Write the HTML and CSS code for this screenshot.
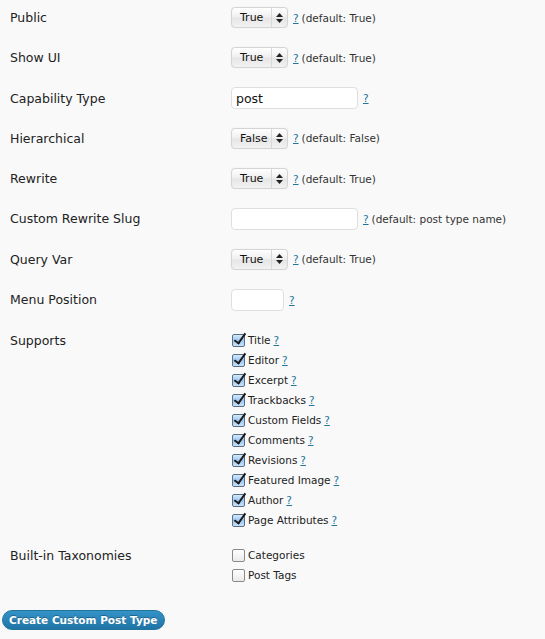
FILE: index.html
```html
<!DOCTYPE html>
<html>
<head>
<meta charset="utf-8">
<link rel="stylesheet" href="styles.css">
</head>
<body>
<div class="form">
  <div class="row">
    <div class="label">Public</div>
    <div class="field"><span class="select"><span class="val">True</span><span class="arrows"><svg width="7" height="10" viewBox="0 0 7 10"><path d="M3.5 0L7 4H0z M3.5 10L7 6H0z" fill="#222"/></svg></span></span><a class="help">?</a><span class="def">(default: True)</span></div>
  </div>
  <div class="row">
    <div class="label">Show UI</div>
    <div class="field"><span class="select"><span class="val">True</span><span class="arrows"><svg width="7" height="10" viewBox="0 0 7 10"><path d="M3.5 0L7 4H0z M3.5 10L7 6H0z" fill="#222"/></svg></span></span><a class="help">?</a><span class="def">(default: True)</span></div>
  </div>
  <div class="row">
    <div class="label">Capability Type</div>
    <div class="field"><span class="input wide">post</span><a class="help">?</a></div>
  </div>
  <div class="row">
    <div class="label">Hierarchical</div>
    <div class="field"><span class="select"><span class="val">False</span><span class="arrows"><svg width="7" height="10" viewBox="0 0 7 10"><path d="M3.5 0L7 4H0z M3.5 10L7 6H0z" fill="#222"/></svg></span></span><a class="help">?</a><span class="def">(default: False)</span></div>
  </div>
  <div class="row">
    <div class="label">Rewrite</div>
    <div class="field"><span class="select"><span class="val">True</span><span class="arrows"><svg width="7" height="10" viewBox="0 0 7 10"><path d="M3.5 0L7 4H0z M3.5 10L7 6H0z" fill="#222"/></svg></span></span><a class="help">?</a><span class="def">(default: True)</span></div>
  </div>
  <div class="row">
    <div class="label">Custom Rewrite Slug</div>
    <div class="field"><span class="input wide"></span><a class="help">?</a><span class="def">(default: post type name)</span></div>
  </div>
  <div class="row">
    <div class="label">Query Var</div>
    <div class="field"><span class="select"><span class="val">True</span><span class="arrows"><svg width="7" height="10" viewBox="0 0 7 10"><path d="M3.5 0L7 4H0z M3.5 10L7 6H0z" fill="#222"/></svg></span></span><a class="help">?</a><span class="def">(default: True)</span></div>
  </div>
  <div class="row">
    <div class="label">Menu Position</div>
    <div class="field"><span class="input narrow"></span><a class="help">?</a></div>
  </div>
  <div class="row row-list">
    <div class="label">Supports</div>
    <div class="list">
      <div class="check"><span class="box on"></span>Title <a class="help">?</a></div>
      <div class="check"><span class="box on"></span>Editor <a class="help">?</a></div>
      <div class="check"><span class="box on"></span>Excerpt <a class="help">?</a></div>
      <div class="check"><span class="box on"></span>Trackbacks <a class="help">?</a></div>
      <div class="check"><span class="box on"></span>Custom Fields <a class="help">?</a></div>
      <div class="check"><span class="box on"></span>Comments <a class="help">?</a></div>
      <div class="check"><span class="box on"></span>Revisions <a class="help">?</a></div>
      <div class="check"><span class="box on"></span>Featured Image <a class="help">?</a></div>
      <div class="check"><span class="box on"></span>Author <a class="help">?</a></div>
      <div class="check"><span class="box on"></span>Page Attributes <a class="help">?</a></div>
    </div>
  </div>
  <div class="row row-list tax">
    <div class="label">Built-in Taxonomies</div>
    <div class="list">
      <div class="check"><span class="box"></span>Categories</div>
      <div class="check"><span class="box"></span>Post Tags</div>
    </div>
  </div>
  <div class="actions"><span class="button">Create Custom Post Type</span></div>
</div>
</body>
</html>
```
FILE: styles.css
```css
html, body {
  margin: 0;
  padding: 0;
  background: #f9f9f9;
}
body {
  font-family: "DejaVu Sans", Verdana, sans-serif;
  color: #333;
  width: 545px;
  height: 639px;
  overflow: hidden;
}
.form {
  padding-top: 7px;
}
.row {
  display: flex;
  align-items: center;
  height: 21px;
  margin-bottom: 19.3px;
}
.label {
  width: 221px;
  padding-left: 10px;
  font-size: 12.5px;
  color: #222;
}
.field {
  display: flex;
  align-items: center;
  font-size: 10.5px;
  height: 21px;
}
.select {
  display: flex;
  align-items: stretch;
  width: 55px;
  height: 19px;
  border: 1px solid #d4d4d4;
  border-radius: 4px;
  background: linear-gradient(#ffffff, #f0f0f0 45%, #e6e6e6 55%, #f2f2f2);
  box-shadow: 0 0 1px rgba(0,0,0,0.15);
  font-size: 11px;
  color: #111;
}
.select .val {
  flex: 1;
  display: flex;
  align-items: center;
  padding-left: 8px;
}
.select .arrows {
  width: 15px;
  border-left: 1px solid #d8d8d8;
  display: flex;
  align-items: center;
  justify-content: center;
}
.input {
  box-sizing: border-box;
  height: 22px;
  flex-shrink: 0;
  border: 1px solid #dfdfdf;
  border-radius: 4px;
  background: #fff;
  font-size: 12.5px;
  color: #111;
  padding-left: 4px;
  display: flex;
  align-items: center;
}
.input.wide { width: 127px; }
.input.narrow { width: 53px; }
.help {
  color: #21759b;
  text-decoration: underline;
  font-size: 10.5px;
  margin-left: 5px;
  margin-right: 3px;
}
.def {
  color: #333;
}
.row-list {
  height: auto;
  align-items: flex-start;
  margin-bottom: 0;
}
.row-list .label {
  padding-top: 4px;
}
.list {
  display: flex;
  flex-direction: column;
  padding-top: 1px;
}
.check {
  display: flex;
  align-items: center;
  height: 20px;
  font-size: 10.5px;
  color: #222;
}
.check .help {
  margin-left: 3px;
}
.box {
  box-sizing: border-box;
  width: 13px;
  height: 13px;
  margin: 0 3px 0 1px;
  border: 1px solid #8a8a8a;
  border-radius: 2px;
  background: linear-gradient(#fff, #eaeaea);
  position: relative;
}
.box.on {
  background: linear-gradient(#d4e8fb, #9cc8f2 50%, #c8e2fa);
  border-color: #5a6e85;
}
.box.on::after {
  content: "";
  position: absolute;
  left: 4px;
  top: -4px;
  width: 4px;
  height: 11px;
  border-right: 2.5px solid #1a1a1a;
  border-bottom: 2.5px solid #1a1a1a;
  transform: rotate(35deg);
}
.tax {
  margin-top: 14px;
}
.tax .label {
  padding-top: 4px;
}
.actions {
  padding: 24px 0 0 2px;
}
.button {
  display: inline-block;
  box-sizing: border-box;
  height: 20px;
  line-height: 19px;
  padding: 0 7px 0 6px;
  border-radius: 11px;
  border: 1px solid #21759b;
  background: linear-gradient(#3493c8, #1f74a6);
  color: #fff;
  font-size: 10.5px;
  font-weight: bold;
  text-shadow: 0 -1px 0 rgba(0,0,0,0.3);
}
```
